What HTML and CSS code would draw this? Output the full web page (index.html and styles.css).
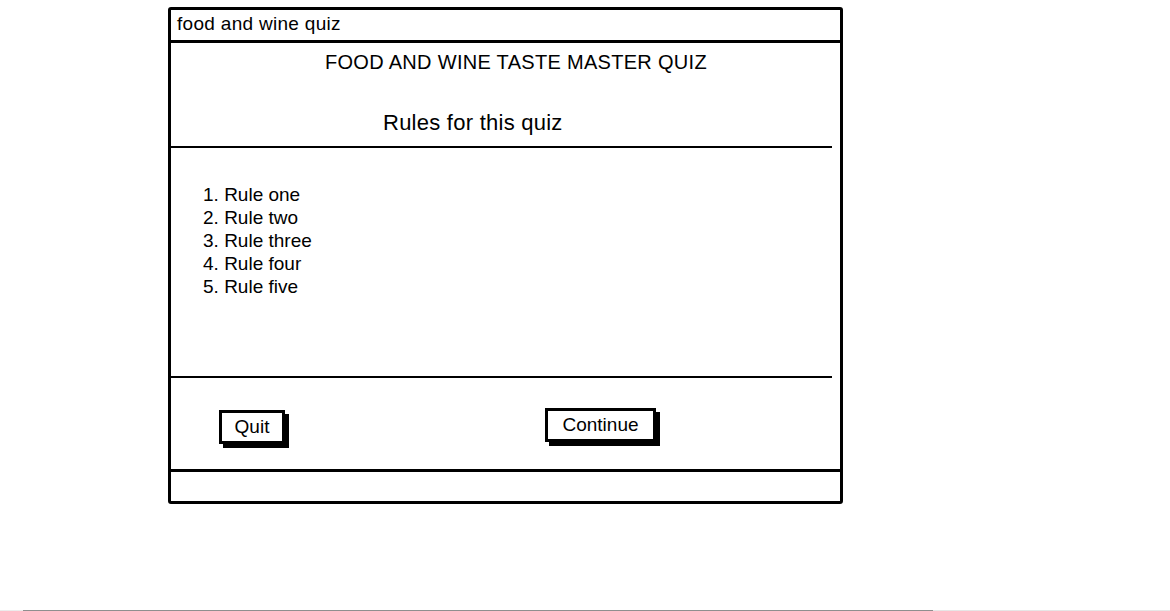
FILE: index.html
```html
<!DOCTYPE html>
<html lang="en">
<head>
<meta charset="utf-8">
<title>food and wine quiz</title>
<link rel="stylesheet" href="styles.css">
</head>
<body>
<div class="page">
  <div class="window">
    <div class="titlebar">food and wine quiz</div>
    <div class="main">
      <h1 class="heading">FOOD AND WINE TASTE MASTER QUIZ</h1>
      <h2 class="subheading">Rules for this quiz</h2>
      <div class="rule-line"></div>
      <ol class="rules">
        <li>Rule one</li>
        <li>Rule two</li>
        <li>Rule three</li>
        <li>Rule four</li>
        <li>Rule five</li>
      </ol>
      <div class="spacer"></div>
      <div class="rule-line"></div>
      <div class="actions">
        <button class="btn btn-quit">Quit</button>
        <button class="btn btn-continue">Continue</button>
      </div>
    </div>
    <div class="statusbar"></div>
  </div>
</div>
<div class="scrollbar"></div>
</body>
</html>
```

FILE: styles.css
```css
html, body {
  margin: 0;
  padding: 0;
  background: #fff;
  overflow: hidden;
}

body {
  width: 1170px;
  height: 611px;
  font-family: "Liberation Sans", Arial, sans-serif;
  color: #000;
}

.page {
  padding: 7px 0 0 168px;
  height: 603px;
  box-sizing: border-box;
}

.window {
  box-sizing: border-box;
  width: 675px;
  height: 497px;
  border: 3px solid #000;
  border-radius: 3px;
  display: flex;
  flex-direction: column;
}

.titlebar {
  height: 30px;
  line-height: 27px;
  padding-left: 6px;
  font-size: 19px;
  letter-spacing: 0.3px;
  border-bottom: 3px solid #000;
  flex: none;
}

.main {
  flex: 1;
  display: flex;
  flex-direction: column;
}

.heading {
  margin: 0;
  padding: 7px 0 0 154px;
  font-size: 20px;
  font-weight: normal;
  line-height: 24px;
  letter-spacing: 0.3px;
}

.subheading {
  margin: 36px 0 0;
  padding-left: 212px;
  font-size: 22px;
  font-weight: normal;
  line-height: 26px;
  letter-spacing: 0.25px;
}

.rule-line {
  height: 2px;
  background: #000;
  margin-right: 8px;
  margin-left: -3px;
  flex: none;
}

.subheading + .rule-line {
  margin-top: 10px;
}

.rules {
  margin: 35px 0 0;
  padding-left: 32px;
  list-style: decimal inside;
  font-size: 19px;
  line-height: 23.1px;
  letter-spacing: 0;
}

.spacer {
  flex: 1;
}

.actions {
  height: 91px;
  display: flex;
  align-items: flex-start;
  padding-left: 48px;
  flex: none;
}

.btn {
  box-sizing: border-box;
  height: 34px;
  border: 3px solid #000;
  background: #fff;
  box-shadow: 4px 4px 0 #000;
  font-family: "Liberation Sans", Arial, sans-serif;
  font-size: 19px;
  color: #000;
  padding: 0;
  line-height: 26px;
}

.btn-quit {
  width: 66px;
  margin-top: 32px;
}

.btn-continue {
  width: 111px;
  margin-top: 30px;
  margin-left: 260px;
}

.statusbar {
  height: 29px;
  border-top: 3px solid #000;
  flex: none;
}

.scrollbar {
  height: 1px;
  margin-top: 7px;
  background: linear-gradient(to right, #ececec 0, #ececec 23px, #8f8f8f 23px, #8f8f8f 933px, #e6e6e6 933px, #e6e6e6 100%);
}
```
